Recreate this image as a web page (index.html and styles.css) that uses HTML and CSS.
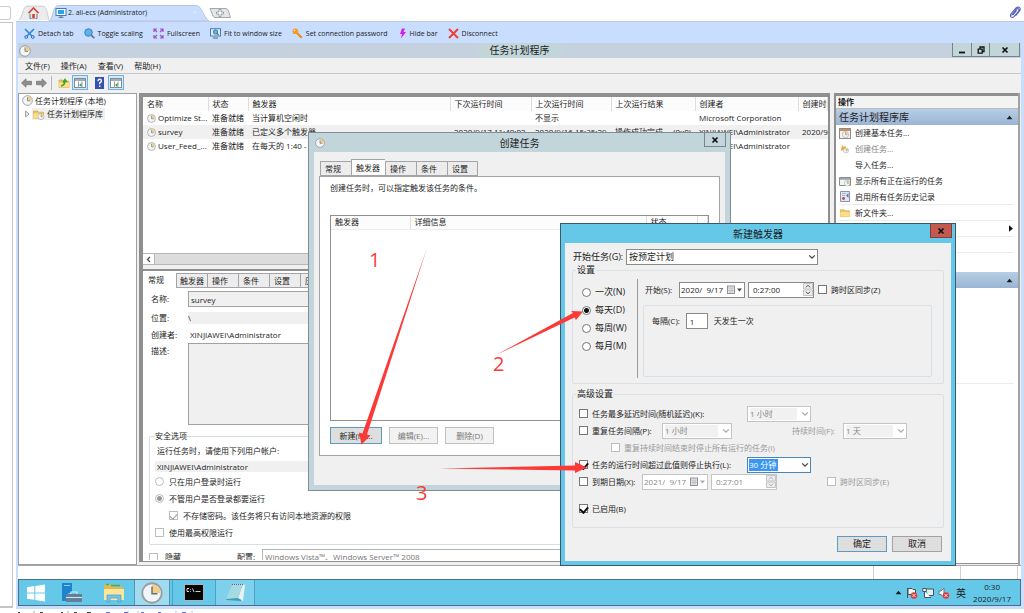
FILE: index.html
```html
<!DOCTYPE html>
<html lang="zh-CN">
<head>
<meta charset="utf-8">
<title>任务计划程序</title>
<link rel="stylesheet" href="styles.css">
</head>
<body>
<svg class="defs" width="0" height="0" aria-hidden="true">
  <symbol id="clock" viewBox="0 0 12 12"><circle cx="6" cy="6" r="5.3" fill="#f2f5f8" stroke="#9a9da2" stroke-width="1"/><path d="M6 6V1.4A4.6 4.6 0 0 1 10.600 6Z" fill="#f3cf84"/><path d="M6 2.4V6.4H9" fill="none" stroke="#69707a" stroke-width=".8"/></symbol>
  <symbol id="chev" viewBox="0 0 8 6"><path d="M1.2 1.4 4 4.2 6.8 1.4" fill="none" stroke="currentColor" stroke-width="1.3"/></symbol>
  <symbol id="up" viewBox="0 0 8 6"><path d="M0.5 5 4 1 7.500 5Z" fill="currentColor"/></symbol>
  <symbol id="cal" viewBox="0 0 16 10"><rect x="0.500" y="1" width="7" height="7.500" fill="#e8e8f0" stroke="#92929c"/><path d="M1 3h6M3 3v5M5 3v5M1 5.500h6" stroke="#a9a9b2" stroke-width=".6"/><path d="M10 3.500h5L12.500 6.500Z" fill="currentColor"/></symbol>
  <symbol id="spin" viewBox="0 0 10 13"><path d="M.5.5h9v5.500h-9zM.5 7h9v5.500h-9z" fill="#ececec" stroke="#c4c4c4"/><path d="M3 4.300 5 2.300l2 2M3 8.800l2 2 2-2" fill="none" stroke="currentColor" stroke-width="1"/></symbol>
  <symbol id="folder" viewBox="0 0 12 12"><path d="M1 3h4l1 1.200h5V10.500H1Z" fill="#f2c45c" stroke="#cf9e3e" stroke-width=".6"/><path d="M1 5.500h10v5H1Z" fill="#fbdf8d"/></symbol>
  <symbol id="panes" viewBox="0 0 12 12"><rect x=".5" y="1.500" width="11" height="9" fill="#fff" stroke="#858b94"/><path d="M1 2h10v2H1z" fill="#a5adb8"/><path d="M4.500 4.500v6M8 4.500v6" stroke="#999"/><path d="M7.500 6v4L5 8Z" fill="#35a43b"/></symbol>
</svg>

<aside class="edge"><div class="edge-search"></div><div class="edge-list"></div></aside>

<main class="session">
  <nav class="tabs">
    <a class="tab tab-home" href="#home" aria-label="Home">
      <svg class="tab-shape" viewBox="0 0 34 16"><path d="M.5 16C5 14 5 1 10 .5H27C31 .5 32 7 34 16" fill="#ececee" stroke="#c4c7cc"/></svg>
      <svg class="tab-icon" width="11" height="12" viewBox="0 0 11 12"><path d="M2 6h7v5.500H2Z" fill="#e9e4dc"/><path d="M.5 6.200 5.500 1 10.500 6.200" fill="none" stroke="#d8463a" stroke-width="1.700"/><path d="M4.200 7h2.600v4.500H4.200Z" fill="#c9463b"/><path d="M2 7v4.500h1.500M9 7v4.500H7.500" fill="none" stroke="#5a80a8"/></svg>
    </a>
    <a class="tab tab-active" href="#session">
      <svg class="tab-shape" viewBox="0 0 162 16" preserveAspectRatio="none"><path d="M0 16C4 14 4 1 9 .5H149C155 .5 156 12 162 16Z" fill="#c9deff" stroke="#b4c4dc"/></svg>
      <svg class="tab-icon" width="12" height="10" viewBox="0 0 12 10"><rect x="1" y=".5" width="10" height="7" fill="#fff" stroke="#3c7fb8"/><path d="M3 2h6v4H3z" fill="#2aa0e8"/><path d="M3.500 9.300h5M6 7.500v2" stroke="#54728c"/></svg>
      <span class="tab-text">2. ali-ecs (Administrator)</span><span class="tab-x">×</span>
    </a>
    <a class="tab tab-new" href="#new" aria-label="New tab"><svg width="22" height="10" viewBox="0 0 22 10"><path d="M1 .5h16q2 0 3 4t1.500 5H6q-2 0-3-4Z" fill="#e3e5e8" stroke="#a4a8ae"/><path d="M10 1.500h2V4h2.500v2H12v2.500h-2V6H7.500V4H10Z" fill="#fff" stroke="#8e9298" stroke-width=".8"/></svg></a>
    <svg class="clip" width="12" height="13" viewBox="0 0 12 13"><path d="M2.500 9.500 7.500 3.200q1.400-1.200 2.300 0 .6 1-.3 2.200L5 10.600q-1.500 1.400-3 .3-1.200-1.300 0-3L7 2q2-1.700 3.600-.3 1.300 1.500-.2 3.500L6.500 9.800M4 9l3.700-4.500" fill="none" stroke="#5862b8" stroke-width="1.100"/></svg>
  </nav>

  <div class="tools">
    <button><svg width="11" height="11" viewBox="0 0 11 11"><path d="M1 1 8 8M10 1 3 8" stroke="#3388dd" stroke-width="1.700"/><circle cx="2.200" cy="9" r="1.400" fill="none" stroke="#1f6fcc"/><circle cx="8.800" cy="9" r="1.400" fill="none" stroke="#1f6fcc"/></svg>Detach tab</button>
    <button><svg width="11" height="11" viewBox="0 0 11 11"><circle cx="4.500" cy="4.500" r="3.800" fill="#56b2f0" stroke="#4a7da8"/><path d="m7.300 7.300 3 3" stroke="#5b6470" stroke-width="1.600"/></svg>Toggle scaling</button>
    <button><svg width="11" height="11" viewBox="0 0 11 11"><path d="M1 4V1h3M7 1h3v3M10 7v3H7M4 10H1V7M1 1l3 3M10 1 7 4M10 10 7 7M1 10l3-3" fill="none" stroke="#a050c8" stroke-width="1.200"/></svg>Fullscreen</button>
    <button><svg width="11" height="11" viewBox="0 0 11 11"><rect x=".5" y=".7" width="10" height="7.300" fill="#d9ecfb" stroke="#4b7ba6"/><circle cx="5.500" cy="4" r="2.200" fill="#5ab5ee" stroke="#35709c" stroke-width=".8"/><path d="m7 5.500 1.500 1.500M3 10h5" stroke="#596673" stroke-width="1.200"/></svg>Fit to window size</button>
    <button><svg width="11" height="11" viewBox="0 0 11 11"><circle cx="3.300" cy="3.300" r="2.800" fill="#f59a1c"/><circle cx="2.500" cy="2.500" r=".7" fill="#fff"/><path d="m5 5 4.800 4.800M7 8.800l1.300-1.300" stroke="#f08a10" stroke-width="2"/></svg>Set connection password</button>
    <button><svg width="9" height="11" viewBox="0 0 9 11"><path d="M4 .5h3L5.500 4H8L3 10.500 4 6H2Z" fill="#d21cf0"/></svg>Hide bar</button>
    <button><svg width="11" height="11" viewBox="0 0 11 11"><path d="m1 1 9 9M10 1 1 10" stroke="#ee3f38" stroke-width="2"/></svg>Disconnect</button>
  </div>

  <div class="desktop">
    <header class="titlebar">
      <svg class="title-icon" width="12" height="12"><use href="#clock"/></svg>
      <h1>任务计划程序</h1>
      <div class="winbtns"><button aria-label="最小化"><svg width="8" height="8" viewBox="0 0 8 8"><path d="M1 6.500h6" stroke="#111" stroke-width="1.800"/></svg></button><button aria-label="还原"><svg width="8" height="8" viewBox="0 0 8 8"><path d="M1.200 3.200h4v4h-4zM3 3V1h4v4.500H5.500" fill="none" stroke="#111" stroke-width="1.300"/></svg></button><button class="wide" aria-label="关闭"><svg width="8" height="8" viewBox="0 0 8 8"><path d="m1.500 1.500 5 5M6.500 1.500l-5 5" stroke="#111" stroke-width="1.700"/></svg></button></div>
    </header>
    <nav class="menubar"><button>文件(F)</button><button>操作(A)</button><button>查看(V)</button><button>帮助(H)</button></nav>
    <div class="iconbar">
      <svg width="11" height="10" viewBox="0 0 11 10"><path d="M5 .8v2.500h5.500v3.400H5v2.500L.5 5Z" fill="#8f8f8f" stroke="#6f6f6f" stroke-width=".7"/></svg>
      <svg width="11" height="10" viewBox="0 0 11 10"><path d="M6 .8v2.500H.5v3.400H6v2.500L10.500 5Z" fill="#8f8f8f" stroke="#6f6f6f" stroke-width=".7"/></svg>
      <i class="sep"></i>
      <svg width="12" height="12" viewBox="0 0 12 12"><use href="#folder"/><path d="M3 9q4-1 4-5M5 5.500l2-3 2 2.500" fill="none" stroke="#3ba52f" stroke-width="1.500"/></svg>
      <button aria-label="控制台树"><svg width="12" height="12"><use href="#panes"/></svg></button>
      <svg class="help" width="9" height="12" viewBox="0 0 9 12"><rect width="9" height="12" fill="#3551b2"/><path d="M3 4.200Q3 2.200 4.800 2.300 6.600 2.400 6.300 4.200 6 5.200 4.700 5.900V7.200M4.700 8.500V10" fill="none" stroke="#fff" stroke-width="1.400"/></svg>
      <button aria-label="操作窗格"><svg width="12" height="12"><use href="#panes"/></svg></button>
    </div>

    <div class="panes">
      <section class="tree">
        <div class="tree-row"><svg width="11" height="11"><use href="#clock"/></svg>任务计划程序 (本地)</div>
        <div class="tree-row child"><svg width="5" height="8" viewBox="0 0 5 8"><path d="M.7 1.200 4 4 .7 6.800Z" fill="#fff" stroke="#777" stroke-width=".8"/></svg><span class="picked"><svg width="13" height="12" viewBox="0 0 12 12"><use href="#folder"/><use href="#clock" x="5" y="5" width="7" height="7"/></svg>任务计划程序库</span></div>
      </section>

      <section class="center">
        <div class="tasks">
          <table>
            <colgroup><col class="c1"><col class="c2"><col class="c3"><col class="c4"><col class="c5"><col class="c6"><col class="c7"><col></colgroup>
            <thead><tr><th>名称</th><th>状态</th><th>触发器</th><th>下次运行时间</th><th>上次运行时间</th><th>上次运行结果</th><th>创建者</th><th>创建时间</th></tr></thead>
            <tbody>
              <tr><td><svg width="9" height="9"><use href="#clock"/></svg>Optimize St...</td><td>准备就绪</td><td>当计算机空闲时</td><td></td><td>不显示</td><td></td><td>Microsoft Corporation</td><td></td></tr>
              <tr class="sel"><td><svg width="9" height="9"><use href="#clock"/></svg>survey</td><td>准备就绪</td><td>已定义多个触发器</td><td>2020/9/17 11:40:02</td><td>2020/9/16 15:35:29</td><td>操作成功完成。 (0x0)</td><td>XINJIAWEI\Administrator</td><td>2020/9/16</td></tr>
              <tr><td><svg width="9" height="9"><use href="#clock"/></svg>User_Feed_...</td><td>准备就绪</td><td>在每天的 1:40 - </td><td></td><td></td><td></td><td>XINJIAWEI\Administrator</td><td></td></tr>
            </tbody>
          </table>
          <div class="hscroll"><button aria-label="向左滚动"><svg width="5" height="7" viewBox="0 0 5 7"><path d="M4 1 1.500 3.500 4 6" fill="none" stroke="#444" stroke-width="1.200"/></svg></button></div>
        </div>
        <div class="splitter"></div>
        <div class="props">
          <div class="ptabs"><button class="on">常规</button><button>触发器</button><button>操作</button><button>条件</button><button>设置</button><button>历史记录</button></div>
          <div class="pform">
            <label for="p-name">名称:</label><input id="p-name" class="boxed" value="survey" readonly>
            <label for="p-path">位置:</label><input id="p-path" class="flat" value="\" readonly>
            <label for="p-author">创建者:</label><input id="p-author" class="bare" value="XINJIAWEI\Administrator" readonly>
            <label for="p-desc" class="top">描述:</label><textarea id="p-desc" readonly></textarea>
          </div>
          <fieldset class="security">
            <legend>安全选项</legend>
            <p>运行任务时，请使用下列用户帐户:</p>
            <output>XINJIAWEI\Administrator</output>
            <label class="opt"><input type="radio" name="logon" disabled>只在用户登录时运行</label>
            <label class="opt"><input type="radio" name="logon" checked disabled>不管用户是否登录都要运行</label>
            <label class="opt sub"><input type="checkbox" checked disabled>不存储密码。该任务将只有访问本地资源的权限</label>
            <label class="opt"><input type="checkbox" disabled>使用最高权限运行</label>
          </fieldset>
          <div class="hidden-row"><label class="opt"><input type="checkbox" disabled>隐藏</label><label for="p-conf">配置:</label><select id="p-conf" disabled><option>Windows Vista™、Windows Server™ 2008</option></select></div>
        </div>
      </section>

      <section class="actions">
        <h2>操作</h2>
        <div class="bar">任务计划程序库<svg width="7" height="5"><use href="#up"/></svg></div>
        <ul>
          <li><svg width="12" height="11" viewBox="0 0 12 11"><rect x=".5" y=".5" width="11" height="10" fill="#f6f2ea" stroke="#8b8b8b"/><path d="M1 1h10v2H1z" fill="#c98f5e"/><use href="#clock" x="3" y="3" width="7" height="7"/></svg><a href="#basic">创建基本任务...</a></li>
          <li class="off"><svg width="12" height="11" viewBox="0 0 12 11"><path d="m3 1 1.500 2L7 2l-.5 3L2 7l.5-3Z" fill="#f0a52b"/><use href="#clock" x="4" y="3.500" width="6" height="6"/></svg><a href="#create">创建任务...</a></li>
          <li><svg width="12" height="11"></svg><a href="#import">导入任务...</a></li>
          <li><svg width="12" height="11" viewBox="0 0 12 11"><path d="M.5 1.500h11v8H.5z" fill="#f4f4f4" stroke="#8d8d8d"/><path d="M1 2h10v1.800H1z" fill="#9aa6b5"/><use href="#clock" x="5" y="4" width="6.500" height="6.500"/></svg><a href="#running">显示所有正在运行的任务</a></li>
          <li class="line"><svg width="12" height="11" viewBox="0 0 12 11"><path d="M1.500.5h9v10h-9z" fill="#dfe6f2" stroke="#8b95a8"/><path d="M3 2.500h4M3 4.500h3" stroke="#a9b6ca"/><circle cx="4.500" cy="7.500" r="1.400" fill="#d6403b"/><path d="M7 4.500 9.500 2v5Z" fill="#5b7fc0"/></svg><a href="#history">启用所有任务历史记录</a></li>
          <li class="line"><svg width="12" height="11"><use href="#folder"/></svg><a href="#folder-new">新文件夹...</a></li>
          <li class="line more"><svg width="4" height="7" viewBox="0 0 5 8"><path d="M0 0 5 4 0 8Z" fill="#111"/></svg></li>
          <li class="line"></li>
          <li class="tall"></li>
        </ul>
        <div class="bar"><span></span><svg width="7" height="5"><use href="#up"/></svg></div>
        <ul><li class="rest line"></li></ul>
      </section>
      <div class="rail"></div>
    </div>
    <footer class="status"><span></span><span></span><span></span></footer>

    <div class="taskbar">
      <button class="t-start" aria-label="开始"><svg width="18" height="18" viewBox="0 0 18 18"><path d="M0 3.200 7.300 2.100V8.500H0ZM8.300 2 18 .5v8H8.300ZM0 9.500h7.300v6.300L0 14.800ZM8.300 9.500H18v8L8.300 16Z" fill="#fff"/></svg></button>
      <button class="t-mid" aria-label="服务器管理器"><svg width="21" height="20" viewBox="0 0 21 20"><path d="M0 0h10v10H6v8H0Z" fill="#1d84cf"/><path d="M2 2.500h6" stroke="#8fd0f6"/><path d="M4 11h16v8H4Z" fill="#63809a"/><path d="M9 11V9h6v2M4 14.500h16" fill="none" stroke="#d9e6ee" stroke-width="1.200"/></svg></button>
      <button class="t-mid" aria-label="文件资源管理器"><svg width="22" height="20" viewBox="0 0 22 20"><path d="M1 2h8l2 2h9v13H1Z" fill="#e3b84c"/><path d="M3 1.500h3M8 2.500h9" stroke="#57a94e" stroke-width="1.500"/><path d="M1 6h20v11H1Z" fill="#fae79b"/><path d="M4 19v-7h14v7h-3v-4H7v4Z" fill="#79c4e8" stroke="#4c9fc8" stroke-width=".7"/></svg></button>
      <button class="t-on" aria-label="任务计划程序"><svg width="22" height="22"><use href="#clock"/></svg></button>
      <button class="t-cmd" aria-label="命令提示符"><svg width="20" height="17" viewBox="0 0 20 17"><rect x=".5" y=".5" width="19" height="16" fill="#060606" stroke="#a9b4ba"/><path d="M5 4.500H3v3h2M6.500 5v.8M6.500 7v.8M8.500 4.500l1.500 3.500M11.500 7.500h5" fill="none" stroke="#e8e8e8" stroke-width=".9"/></svg></button>
      <button class="t-note" aria-label="记事本"><svg width="21" height="20" viewBox="0 0 21 20"><path d="M7 1h12l-3 17-15-1Z" fill="#3f9db5"/><path d="M7 1h11l-5 14-12 1Z" fill="#a5dae5"/><path d="M18 1l2 1-2 16-5-3Z" fill="#e9f1f3"/><path d="M7 1.500h12" stroke="#667" stroke-dasharray="1 1"/></svg></button>
      <div class="tray">
        <svg width="7" height="5"><use href="#up"/></svg>
        <svg width="12" height="12" viewBox="0 0 12 12"><path d="M1.500 1v10M2 1.500h4l1 1h2.500v5H2Z" fill="#eef3f5" stroke="#44525a"/><circle cx="8" cy="8.500" r="3.200" fill="#df3b36"/><path d="m6.700 7.200 2.600 2.600M9.300 7.200 6.700 9.800" stroke="#fff"/></svg>
        <svg width="12" height="12" viewBox="0 0 12 12"><path d="M4.500 2h7v6.500H6" fill="#dfeff4" stroke="#44525a"/><path d="M.8 1.500h3.400v3H.8ZM2.500 4.500v6H9" fill="#fff" stroke="#44525a"/></svg>
        <svg width="12" height="12" viewBox="0 0 12 12"><path d="M1 4h2l3-3v9L3 7.500H1Z" fill="#f5f8f9" stroke="#6b7a82"/><circle cx="8" cy="8.500" r="3.200" fill="#df3b36"/><path d="m6.700 7.200 2.600 2.600M9.300 7.200 6.700 9.800" stroke="#fff"/></svg>
        <span class="ime">英</span>
        <time>0:30<br>2020/9/17</time>
      </div>
    </div>

    <section class="dialog create">
      <header><svg width="10" height="10"><use href="#clock"/></svg><h2>创建任务</h2><button aria-label="关闭"><svg width="8" height="8" viewBox="0 0 8 8"><path d="m1.500 1.500 5 5M6.500 1.500l-5 5" stroke="#111" stroke-width="1.700"/></svg></button></header>
      <div class="dbody">
        <div class="dtabs"><button>常规</button><button class="on">触发器</button><button>操作</button><button>条件</button><button>设置</button></div>
        <div class="dpanel">
          <p>创建任务时，可以指定触发该任务的条件。</p>
          <div class="list"><table><colgroup><col class="d1"><col class="d2"><col class="d3"><col></colgroup><thead><tr><th>触发器</th><th>详细信息</th><th>状态</th><th></th></tr></thead></table></div>
          <div class="dbtns"><button class="hot">新建(N)...</button><button disabled>编辑(E)...</button><button disabled>删除(D)</button></div>
        </div>
      </div>
    </section>

    <section class="dialog trigger">
      <header><h2>新建触发器</h2><button aria-label="关闭"><svg width="8" height="8" viewBox="0 0 8 8"><path d="m1.500 1.500 5 5M6.500 1.500l-5 5" stroke="#111" stroke-width="1.700"/></svg></button></header>
      <form class="dbody">
        <div class="begin"><label for="begin">开始任务(G):</label><span class="combo w-begin"><select id="begin"><option>按预定计划</option></select><svg width="8" height="6"><use href="#chev"/></svg></span></div>
        <fieldset class="schedule">
          <legend>设置</legend>
          <div class="cols">
            <div class="kinds">
              <label><input type="radio" name="kind">一次(N)</label>
              <label><input type="radio" name="kind" checked>每天(D)</label>
              <label><input type="radio" name="kind">每周(W)</label>
              <label><input type="radio" name="kind">每月(M)</label>
            </div>
            <div class="when">
              <div class="row"><label for="sd" class="w-start">开始(S):</label><span class="combo w-date"><input id="sd" value="2020/  9/17"><svg width="16" height="10"><use href="#cal"/></svg></span><span class="combo w-time"><input aria-label="时间" value="0:27:00"><svg width="10" height="13"><use href="#spin"/></svg></span><label class="opt"><input type="checkbox">跨时区同步(Z)</label></div>
              <div class="every"><label for="every">每隔(C):</label><input id="every" value="1"><span>天发生一次</span></div>
            </div>
          </div>
        </fieldset>
        <fieldset class="advanced">
          <legend>高级设置</legend>
          <div class="row"><label class="opt w-long"><input type="checkbox">任务最多延迟时间(随机延迟)(K):</label><span class="combo w-mid off"><select aria-label="延迟" disabled><option>1 小时</option></select><svg width="8" height="6"><use href="#chev"/></svg></span></div>
          <div class="row"><label class="opt w-short"><input type="checkbox">重复任务间隔(P):</label><span class="combo w-rep off"><select aria-label="间隔" disabled><option>1 小时</option></select><svg width="8" height="6"><use href="#chev"/></svg></span><label for="dur" class="dim w-dur">持续时间(F):</label><span class="combo w-mid off"><select id="dur" disabled><option>1 天</option></select><svg width="8" height="6"><use href="#chev"/></svg></span></div>
          <div class="row"><label class="opt dim inset"><input type="checkbox" disabled>重复持续时间结束时停止所有运行的任务(I)</label></div>
          <div class="row"><label class="opt w-long"><input type="checkbox" checked>任务的运行时间超过此值则停止执行(L):</label><span class="combo w-mid focus"><input aria-label="时限" class="marked" value="30 分钟"><svg width="8" height="6"><use href="#chev"/></svg></span></div>
          <div class="row"><label class="opt w-exp"><input type="checkbox">到期日期(X):</label><span class="combo w-date off"><input aria-label="到期日期" value="2021/  9/17" disabled><svg width="16" height="10"><use href="#cal"/></svg></span><span class="combo w-time off"><input aria-label="到期时间" value="0:27:01" disabled><svg width="10" height="13"><use href="#spin"/></svg></span><label class="opt dim w-sync"><input type="checkbox" disabled>跨时区同步(E)</label></div>
          <div class="row last"><label class="opt"><input type="checkbox" checked>已启用(B)</label></div>
        </fieldset>
        <div class="okrow"><button type="button" class="hot">确定</button><button type="button">取消</button></div>
      </form>
    </section>
  </div>
  <div class="below"><svg width="200" height="3" viewBox="0 0 200 3"><path d="M2 2.500h2M18 1.500v1M24 2.500h3M45 2.500h2M52 1.500v1M58 2.500h3M71 2.500h4" stroke="#444"/><path d="M90 2.500h4M108 2.500h4M112 1.500v1M122 1.500v1M125 2.500h3M142 2.500h3M160 1.500v1M166 2.500h4M176 1.500v1" stroke="#6b6bd8"/></svg></div>
</main>

<svg class="marks" width="1024" height="613" viewBox="0 0 1024 613">
  <g fill="#fb3a38">
    <path d="M427 248 367 434.500 370.500 435.500 361.500 444.500 359 432.500 362.500 433.500Z"/>
    <path d="M496 355 573 313 571 311 583 311.500 576 320 574.500 317.500Z"/>
    <path d="M439 468.500 575 465.500V462L587 467.500 575 473V470.500Z"/>
    <text x="369" y="267">1</text><text x="493" y="371">2</text><text x="416" y="500">3</text>
  </g>
</svg>
</body>
</html>
```
FILE: styles.css
```css
* { box-sizing: border-box; }
body {
  margin: 0; height: 100vh; display: flex; overflow: hidden; position: relative;
  background: #fff; color: #1c1c1c;
  font: 8px/12px "Open Sans", "Noto Sans CJK SC", sans-serif;
}
button, input, select, textarea { font: inherit; color: inherit; margin: 0; padding: 0; border: 0; border-radius: 0; background: none; outline: 0; min-width: 0; }
button { display: flex; align-items: center; justify-content: center; white-space: nowrap; }
h1, h2, p, ul, fieldset { margin: 0; padding: 0; border: 0; min-width: 0; font-weight: 400; }
ul { list-style: none; }
a { color: inherit; text-decoration: none; }
label { white-space: nowrap; }
svg { flex: none; }
.defs { position: absolute; }

.edge { width: 13px; flex: none; display: flex; flex-direction: column; gap: 2px; padding: 6px 0 5px; margin-right: 3px; }
.edge-search { height: 14px; margin-right: 2px; border: 1px solid #ccc; border-left: 0; border-radius: 0 3px 3px 0; }
.edge-list { flex: 1; border: 1px solid #c4c4c4; border-width: 1px 1px 2px 0; }

.session { flex: 1; min-width: 0; display: flex; flex-direction: column; }
.tabs { height: 22px; flex: none; display: flex; align-items: flex-end; border-bottom: 1px solid #bccbe2; padding: 0 3px 0 2px; }
.tab { position: relative; height: 16px; display: flex; align-items: center; }
.tab-shape { position: absolute; inset: 0; width: 100%; height: 100%; }
.tab-icon { position: relative; }
.tab-home { width: 31px; justify-content: center; }
.tab-active { width: 160px; padding-left: 6px; gap: 1px; }
.tab-text, .tab-x { position: relative; font: 7px/12px "Open Sans", sans-serif; white-space: nowrap; }
.tab-x { margin-left: auto; margin-right: 12px; color: #e6f0ff; }
.clip { margin-left: auto; margin-bottom: 2px; }

.tools { height: 21px; flex: none; display: flex; align-items: center; gap: 10px; padding: 2px 0 0 8px; background: #c9deff; font: 7px/12px "Open Sans", sans-serif; }
.tools button { gap: 3px; }

.desktop { flex: 1; min-height: 0; display: flex; flex-direction: column; position: relative; margin: 0 3px 0 0; border-left: 2px solid #c9deff; background: #f0f0f0; outline: 3px solid #c9deff; clip-path: inset(0 -3px -3px 0); }
.titlebar { height: 15px; flex: none; display: grid; grid-template-columns: 1fr auto 1fr; background: #c6d1df; }
.title-icon { margin: 2px 0 0 1px; }
.titlebar h1 { font-size: 10px; line-height: 15px; padding: 0 12px; background: #c2d6da; }
.winbtns { display: flex; justify-self: end; height: 14px; border: 1px solid #77848c; border-top: 0; background: #c2d6da; margin-right: 1px; }
.winbtns button { width: 18px; }
.winbtns button + button { border-left: 1px solid #77848c; }
.winbtns .wide { width: 30px; }
.menubar { height: 16px; flex: none; display: flex; gap: 11px; padding-left: 7px; border-bottom: 1px solid #c8c8c8; }
.iconbar { height: 19px; flex: none; display: flex; align-items: center; gap: 4px; padding: 0 0 2px 3px; }
.iconbar .sep { width: 1px; height: 14px; background: #b8b8b8; margin-right: 2px; }
.iconbar button { width: 16px; height: 15px; margin-left: -2px; border: 1px solid #6cb4e4; background: #d2e8f8; }
.iconbar .help { margin: 0 2px 0 3px; }

.panes { flex: 1; min-height: 0; display: flex; }
.tree { width: 119px; flex: none; background: #fff; border: 1px solid #9aa0a6; padding: 0 3px; }
.tree-row { display: flex; align-items: center; gap: 2px; height: 13px; white-space: nowrap; }
.tree-row.child { padding-left: 3px; }
.picked { display: flex; align-items: center; gap: 2px; background: #f0f0f0; padding-right: 2px; }
.center { flex: 1; min-width: 0; margin: 0 4px 3px 2px; display: flex; flex-direction: column; border: 1px solid #8f8f8f; border-width: 4px 2px 1px 4px; background: #fff; overflow: hidden; }
.center .tasks { height: 168px; flex: none; display: flex; flex-direction: column; }
table { border-collapse: collapse; table-layout: fixed; width: 100%; }
th, td { font-weight: 400; text-align: left; white-space: nowrap; overflow: hidden; padding: 0 0 0 4px; height: 14px; line-height: 12px; }
th { border-right: 1px solid #dedede; background: #fcfcfc; }
td svg { vertical-align: -2px; margin-right: 2px; }
td:nth-child(3) { overflow: visible; }
.sel td { background: #f0f0f0; }
.c1 { width: 65px; } .c2 { width: 40px; } .c3 { width: 202px; } .c4 { width: 81px; } .c5 { width: 80px; } .c6 { width: 84px; } .c7 { width: 103px; }
.hscroll { margin-top: auto; height: 12px; background: #dcdcdc; border: 1px solid #b6b6b6; border-left: 0; display: flex; }
.hscroll button { width: 12px; background: #fff; border-right: 1px solid #b6b6b6; }
.splitter { height: 6px; flex: none; background: #f0f0f0; border-bottom: 2px solid #8f8f8f; }
.props { flex: 1; min-height: 0; display: flex; flex-direction: column; overflow: hidden; }
.ptabs, .dtabs { display: flex; align-items: flex-end; flex: none; }
.ptabs { height: 17px; }
.ptabs button, .dtabs button { height: 15px; width: 31px; justify-content: flex-start; padding-left: 4px; background: #ececec; border: 1px solid #a3a3a8; border-right-width: 0; }
.ptabs button:nth-child(2) { padding-left: 3px; }
.ptabs button:last-child { width: 44px; border-right-width: 1px; }
.ptabs .on { width: 33px; height: 17px; background: #fff; border-color: transparent; }
.pform { display: grid; grid-template-columns: 37px 1fr; padding: 2px 12px 0 8px; align-items: center; grid-template-rows: 18px 19px 16px 82px; flex: none; }
.pform .boxed { height: 16px; border: 1px solid #a2a2a2; background: #f0f0f0; padding-left: 2px; }
.pform .flat { height: 12px; background: #f0f0f0; }
.pform .bare { padding-left: 2px; }
.pform .top { align-self: start; padding-top: 2px; }
.pform textarea { height: 82px; border: 1px solid #a2a2a2; background: #f0f0f0; resize: none; }
.security { margin: 5px 8px 0 6px; border: 1px solid #d5dfe5; border-radius: 2px; padding: 3px 5px; display: block; flex: none; }
.security legend { padding: 0; }
.security p { padding-left: 2px; height: 16px; }
.security output { display: block; background: #f0f0f0; padding-left: 2px; height: 11px; line-height: 11px; margin-bottom: 1px; }
.opt { display: flex; align-items: center; gap: 4px; }
.security .opt { height: 17px; gap: 5px; }
.security .sub { padding-left: 14px; }
input[type=radio], input[type=checkbox] { appearance: none; width: 9px; height: 9px; flex: none; border: 1px solid #777; background: #fff; }
input[type=radio] { border-radius: 50%; }
input[type=radio]:checked { background: radial-gradient(circle, #111 0 2px, #fff 3px); }
input[type=checkbox]:checked { display: grid; place-items: center; }
input[type=checkbox]:checked::after { content: ""; width: 4px; height: 6px; margin-bottom: 2px; border: solid #111; border-width: 0 2px 2px 0; rotate: 42deg; }
input:disabled[type=radio], input:disabled[type=checkbox] { border-color: #bdbdbd; }
input:disabled[type=radio]:checked { background: radial-gradient(circle, #999 0 2px, #fff 3px); }
input[type=checkbox]:disabled:checked::after { border-color: #999; border-width: 0 1px 1px 0; }
.hidden-row { display: flex; align-items: flex-start; margin: 4px 8px 0 6px; height: 11px; overflow: hidden; flex: none; }
.hidden-row .opt { width: 88px; gap: 7px; padding-top: 2px; }
.hidden-row > label:nth-child(2) { width: 25px; padding-top: 2px; }
.hidden-row select { appearance: none; flex: 1; height: 16px; border: 1px solid #b5b5b5; padding-left: 2px; color: #777; opacity: 1; background: #fff; }

.actions { width: 184px; flex: none; background: #fff; border: 1px solid #8f8f8f; border-width: 3px 0 1px 2px; margin-bottom: 1px; }
.actions h2 { font-size: 8px; font-weight: 700; height: 13px; line-height: 12px; padding-left: 2px; background: #f3f3f3; border-bottom: 1px solid #bbb; }
.bar { height: 16px; display: flex; align-items: center; justify-content: space-between; padding: 0 5px 0 3px; font-size: 10px; background: linear-gradient(#b7cde5, #9ab5d4); }
.actions li { height: 16px; display: flex; align-items: center; gap: 4px; margin: 0 4px 0 3px; }
.actions .off { color: #848484; }
.actions .line { border-bottom: 1px solid #ececec; }
.actions .more { justify-content: flex-end; padding-right: 1px; }
.actions .tall { height: 19px; }
.actions .rest { height: 96px; }
.rail { width: 2px; flex: none; background: #a2a2a2; margin: 0 1px 0 0; }
.status { height: 14px; flex: none; background: #fff; display: flex; border-top: 1px solid #a8a8a8; padding-right: 3px; }
.status span { border-right: 1px solid #d0d0d0; width: 87px; }
.status span:first-child { flex: 1; }
.status span:last-child { width: 57px; }

.taskbar { height: 27px; flex: none; display: flex; background: #65c8e8; border: 1px solid #4b6e80; }
.t-start { width: 33px; }
.t-mid { width: 41px; }
.t-on { width: 36px; background: #9fdcf0; border: 1px solid #5a93aa; border-width: 0 1px; }
.t-cmd { width: 44px; border: 1px solid #4aa3c2; border-width: 0 1px; margin-left: 2px; }
.t-note { width: 39px; background: #7fd0ec; border-right: 1px solid #4aa3c2; }
.tray { margin-left: auto; display: flex; align-items: center; gap: 4px; padding-right: 9px; }
.tray .ime { font-size: 10px; margin: 0 3px 0 2px; }
.tray time { text-align: center; line-height: 12px; }
.below { height: 7px; flex: none; display: flex; align-items: flex-end; border-top: 2px solid #c9deff; }

.dialog { position: absolute; display: flex; flex-direction: column; border: 1px solid #7f8d94; padding: 0 5px 5px; }
.dialog header { height: 19px; flex: none; display: grid; grid-template-columns: 1fr auto 1fr; align-items: center; }
.dialog h2 { font-size: 10px; grid-column: 2; }
.dialog header button { grid-column: 3; justify-self: end; align-self: start; width: 22px; height: 14px; border: 1px solid #77848c; border-top: 0; margin-right: -1px; }
.dbody { flex: 1; background: #f0f0f0; }
.create { left: 290px; top: 89px; width: 423px; height: 359px; background: #c2d5da; }
.create header > svg { margin-left: 1px; }
.create .dbody { padding: 7px 5px 29px 5px; display: flex; flex-direction: column; }
.dtabs { height: 17px; padding-left: 1px; }
.dtabs .on { width: 34px; height: 17px; background: #fff; }
.dtabs button:last-child { border-right-width: 1px; }
.dpanel { flex: 1; background: #fff; border: 1px solid #a3a3a8; padding: 5px 10px 11px; display: flex; flex-direction: column; }
.dpanel p { height: 33px; }
.list { flex: 1; border: 1px solid #8f8f8f; }
.list th { border-bottom: 1px solid #ececec; height: 13px; }
.d1 { width: 79px; } .d2 { width: 236px; } .d3 { width: 51px; }
.dbtns { display: flex; gap: 7px; padding-top: 6px; }
.dbtns button { width: 49px; height: 17px; border: 1px solid #c0c0c0; background: #f2f2f2; color: #777; }
.dbtns .hot { width: 52px; background: #dedede; border: 1px solid #5b9bc4; color: #1c1c1c; }

.trigger { left: 542px; top: 180px; width: 396px; height: 343px; background: #65c8e8; border-color: #39596a; padding: 0 4px 4px; }
.trigger header button { background: #c25a50; border-color: #8a3d36; }
.trigger .dbody { padding: 6px 7px 0; }
.begin { display: flex; align-items: center; height: 15px; font-size: 9px; }
.begin label { width: 54px; padding-left: 1px; }
.combo { position: relative; display: flex; align-items: center; height: 16px; background: #fff; border: 1px solid #8a8a8a; }
.combo select, .combo input { appearance: none; flex: 1; width: 100%; padding-left: 2px; opacity: 1; }
.combo .marked, .combo input { white-space: pre; }
.combo svg { position: absolute; right: 1px; color: #444; }
.w-begin { width: 192px; }
.w-start { width: 36px; padding-left: 2px; }
.w-date { width: 66px; } .w-time { width: 66px; margin-left: 3px; margin-right: 4px; }
.w-date input { padding-left: 1px; }
.w-time input { padding-left: 4px; }
.combo.w-time svg { right: 0; }
.w-mid { width: 64px; } .w-rep { width: 70px; }
.w-long { width: 168px; } .w-short { width: 83px; } .w-exp { width: 63px; }
.w-dur { width: 111px; padding-left: 60px; }
.w-sync { margin-left: 46px; }
.combo.off { border-color: #c4c4c4; color: #888; }
.combo.off select { background: linear-gradient(#f1f1f1, #f1f1f1) 2px 1px / calc(100% - 15px) calc(100% - 2px) no-repeat; height: 14px; }
.combo.off svg { color: #aaa; }
.combo.focus { border-color: #4a86b5; }
.combo .marked { flex: none; width: 29px; height: 12px; padding: 0; margin-left: 1px; background: #3a96f5; color: #fff; }
.trigger fieldset { border: 1px solid #d9e1e6; border-radius: 2px; }
.trigger legend { font-size: 9px; padding: 0 1px; margin-left: 3px; }
.cols { display: flex; padding: 3px 0 5px; }
.kinds { width: 65px; flex: none; height: 99px; padding: 4px 0 0 9px; border-right: 1px solid #9a9a9a; font-size: 9px; }
.kinds label { display: flex; align-items: center; gap: 4px; height: 18px; }
.when { flex: 1; padding: 2px 11px 0 5px; display: flex; flex-direction: column; gap: 7px; }
.row { display: flex; align-items: center; height: 17px; }
.every { display: flex; align-items: center; height: 72px; padding: 0 0 40px 8px; gap: 6px; border: 1px solid #d9e1e6; border-radius: 2px; }
.every input { width: 22px; height: 16px; border: 1px solid #8a8a8a; background: #fff; padding-left: 3px; }
.trigger .advanced { margin-top: 4px; padding: 5px 0 10px 6px; }
.trigger .advanced legend { margin-left: -3px; }
.dim { color: #9a9a9a; }
.inset { padding-left: 32px; }
.row.last { margin-top: 10px; }
.okrow { display: flex; justify-content: flex-end; gap: 5px; padding: 8px 2px 0; }
.okrow button { width: 50px; height: 16px; background: #dedede; border: 1px solid #a2a2a2; font-size: 9px; }
.okrow .hot { border-color: #5b9bc4; }

.marks { position: absolute; left: 0; top: 0; pointer-events: none; }
.marks text { font: 20px "Open Sans", sans-serif; }
```
